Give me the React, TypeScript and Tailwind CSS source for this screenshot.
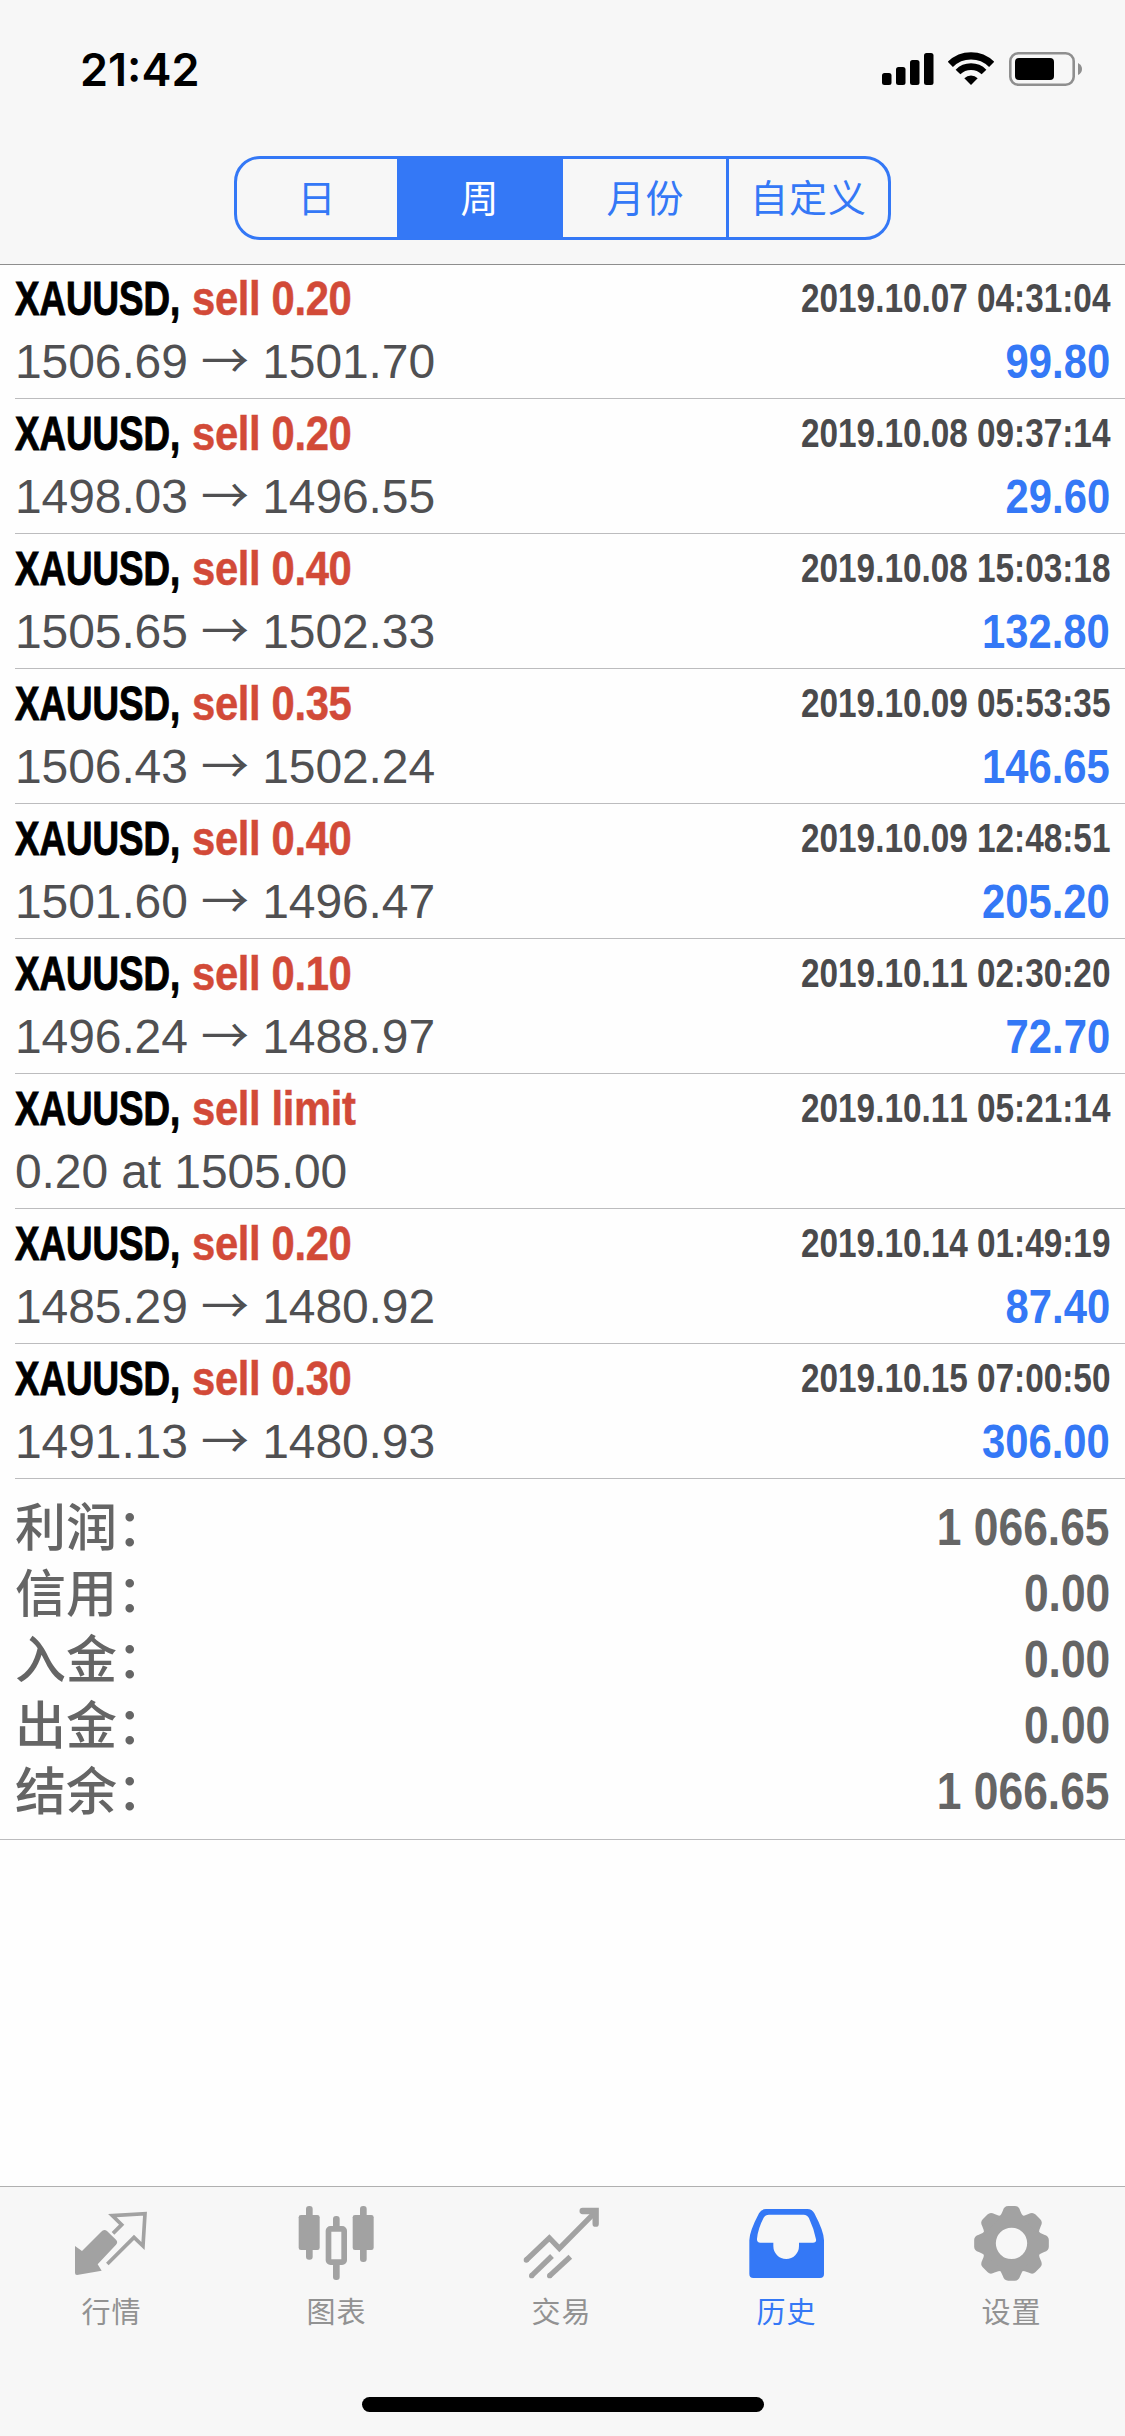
import type { ReactNode } from 'react';
import { clsx } from 'clsx';

interface Deal {
  action: string;
  time: string;
  open: string;
  close?: string;
  profit?: string;
}

const deals: Deal[] = [
  { action: 'sell 0.20', time: '2019.10.07 04:31:04', open: '1506.69', close: '1501.70', profit: '99.80' },
  { action: 'sell 0.20', time: '2019.10.08 09:37:14', open: '1498.03', close: '1496.55', profit: '29.60' },
  { action: 'sell 0.40', time: '2019.10.08 15:03:18', open: '1505.65', close: '1502.33', profit: '132.80' },
  { action: 'sell 0.35', time: '2019.10.09 05:53:35', open: '1506.43', close: '1502.24', profit: '146.65' },
  { action: 'sell 0.40', time: '2019.10.09 12:48:51', open: '1501.60', close: '1496.47', profit: '205.20' },
  { action: 'sell 0.10', time: '2019.10.11 02:30:20', open: '1496.24', close: '1488.97', profit: '72.70' },
  { action: 'sell limit', time: '2019.10.11 05:21:14', open: '0.20 at 1505.00' },
  { action: 'sell 0.20', time: '2019.10.14 01:49:19', open: '1485.29', close: '1480.92', profit: '87.40' },
  { action: 'sell 0.30', time: '2019.10.15 07:00:50', open: '1491.13', close: '1480.93', profit: '306.00' },
];

const summary = [
  ['利润', '1 066.65'],
  ['信用', '0.00'],
  ['入金', '0.00'],
  ['出金', '0.00'],
  ['结余', '1 066.65'],
];

const periods = [
  { label: '日', width: 'w-[160px]' },
  { label: '周', width: 'w-[166px]' },
  { label: '月份', width: 'w-[163px] pl-[2px]' },
  { label: '自定义', width: 'w-[162px]' },
];

// Condensed look: bold sans squeezed horizontally
const amount = "origin-right scale-x-[0.87] font-['Liberation_Sans',sans-serif] font-bold";

function StatusBar() {
  return (
    <div className="flex h-[138px] items-center justify-between pr-[43px] pl-[80px]">
      <span className="font-['Inter',sans-serif] text-[45px] leading-none font-semibold text-black">21:42</span>
      <div className="flex items-center">
        <svg className="h-[34px] w-[52px]" viewBox="0 0 52 34">
          <rect x="0" y="21" width="9.5" height="12" rx="2.5" />
          <rect x="14" y="15" width="9.5" height="18" rx="2.5" />
          <rect x="28" y="8" width="9.5" height="25" rx="2.5" />
          <rect x="42" y="1" width="9.5" height="32" rx="2.5" />
        </svg>
        <svg className="ml-[14px] h-[34px] w-[46px]" viewBox="0 0 138 102" fill="none" stroke="#000">
          <path d="M7 37A88 88 0 0 1 131 37" strokeWidth="22" />
          <path d="M30 60A55 55 0 0 1 108 60" strokeWidth="20" />
          <path d="M69 99L49 79A28 28 0 0 1 89 79Z" fill="#000" stroke="none" />
        </svg>
        <svg className="ml-[15px] h-[34px] w-[73px]" viewBox="0 0 73 34">
          <rect x="1.3" y="1.3" width="63.4" height="31.4" rx="8" fill="none" stroke="#8f8f8f" strokeWidth="2.6" />
          <rect x="6" y="6" width="39" height="22" rx="4" />
          <path d="M69 11Q73 13 73 17T69 23Z" fill="#8f8f8f" />
        </svg>
      </div>
    </div>
  );
}

function PeriodPicker() {
  return (
    <div className="mx-auto mt-[18px] flex h-[84px] w-[657px] overflow-hidden rounded-[26px] border-3 border-[#3478f6]">
      {periods.map(({ label, width }, i) => (
        <button
          key={label}
          className={clsx(
            "flex items-center justify-center pb-[4px] font-['Noto_Sans_CJK_SC',sans-serif] text-[38px] leading-none tracking-[1px]",
            width,
            i === 1 ? 'bg-[#3478f6] text-white' : 'text-[#3478f6]',
            i === 3 && 'border-l-3 border-[#3478f6]',
          )}
        >
          {label}
        </button>
      ))}
    </div>
  );
}

function DealRow({ deal }: { deal: Deal }) {
  return (
    <li className="ml-[15px] h-[135px] border-b border-[#bcbcbe] pr-[15px] font-['Liberation_Sans',sans-serif] [font-kerning:none]">
      <div className="flex h-[70px] items-center font-bold">
        <p className="w-[177px] origin-left scale-x-[0.765] text-[48px] leading-none whitespace-nowrap text-black [-webkit-text-stroke:1px_#000]">
          XAUUSD,
        </p>
        <p className="origin-left scale-x-[0.87] text-[48px] leading-none tracking-[-0.4px] text-[#d24a38] [-webkit-text-stroke:0.5px_#d24a38]">
          {deal.action}
        </p>
        <p className="ml-auto origin-right scale-x-[0.833] pb-[2px] text-[40px] leading-none text-[#4a4a4c]">
          {deal.time}
        </p>
      </div>
      <div className="flex h-[55px] items-center justify-between text-[48px] leading-none">
        <p className="tracking-[-0.1px] text-[#505052]">
          {deal.open}
          {deal.close && (
            <>
              {' '}
              <span className="font-['Noto_Sans_CJK_SC',sans-serif] leading-[0]">→</span> {deal.close}
            </>
          )}
        </p>
        <p className={clsx('text-[#3478f6]', amount)}>{deal.profit}</p>
      </div>
    </li>
  );
}

function QuotesIcon() {
  return (
    <>
      <path d="M14 129L35 144L92 87Q101 76 110 84L137 110Q144 118 137 125L82 184L94 203L20 216Q14 216 14 210Z" />
      <path d="M128 91L154 65L126 38L224 32L218 129L191 103L111 183" fill="none" stroke="currentColor" strokeWidth="11" />
    </>
  );
}

function ChartIcon() {
  return (
    <>
      <rect x="32" y="9" width="20" height="161" rx="9" />
      <rect x="10" y="36" width="63" height="105" rx="7" />
      <rect x="194" y="9" width="20" height="168" rx="9" />
      <rect x="172" y="36" width="63" height="105" rx="7" />
      <rect x="113" y="39" width="20" height="40" rx="9" />
      <rect x="113" y="178" width="20" height="53" rx="9" />
      <rect x="99.5" y="77.5" width="47" height="100" rx="6" fill="none" stroke="currentColor" strokeWidth="17" />
    </>
  );
}

function TradeIcon() {
  return (
    <g fill="none" stroke="currentColor" strokeWidth="16">
      <path d="M18 171L87 105L117 136L221 31" />
      <path d="M187 24H226V62" strokeWidth="19" strokeLinecap="round" />
      <path d="M34 218L95 159" />
      <path d="M88 218L150 161" />
      <g fill="currentColor" stroke="none">
        <circle cx="18" cy="171" r="8" />
        <circle cx="34" cy="218" r="8" />
        <circle cx="88" cy="218" r="8" />
      </g>
    </g>
  );
}

function HistoryIcon() {
  return (
    <path
      fillRule="evenodd"
      d="M62 18H186Q200 18 207 31Q236 86 236 112V213Q236 225 224 225H24Q12 225 12 213V112Q12 86 41 31Q48 18 62 18ZM71 35Q60 35 55 44Q38 76 35 107Q34 119 45 119H84V129A38.5 39 0 0 0 161 129V119H203Q214 119 212 109Q206 78 191 46Q186 35 175 35Z"
    />
  );
}

const teeth = [0, 45, 90, 135, 180, 225, 270, 315];

function SettingsIcon() {
  return (
    <g transform="translate(123.5 121)">
      <circle r="68" fill="none" stroke="currentColor" strokeWidth="42" />
      {teeth.map((angle) => (
        <path
          key={angle}
          transform={`rotate(${angle})`}
          d="M-38 -78Q-30 -86 -26 -98Q-22 -112 -10 -112H10Q22 -112 26 -98Q30 -86 38 -78Z"
        />
      ))}
    </g>
  );
}

const tabs: { label: string; icon: ReactNode; active?: boolean }[] = [
  { label: '行情', icon: <QuotesIcon /> },
  { label: '图表', icon: <ChartIcon /> },
  { label: '交易', icon: <TradeIcon /> },
  { label: '历史', icon: <HistoryIcon />, active: true },
  { label: '设置', icon: <SettingsIcon /> },
];

function TabBar() {
  return (
    <nav className="flex h-[250px] flex-col border-t border-[#b0b0b0] bg-[#f7f7f7]">
      <div className="flex pt-4">
        {tabs.map((tab) => (
          <a
            key={tab.label}
            className={clsx('flex flex-1 flex-col items-center', tab.active ? 'text-[#3478f6]' : 'text-[#a2a2a2]')}
          >
            <svg className="mr-px size-[84px]" viewBox="-1 0 252 252" fill="currentColor">
              {tab.icon}
            </svg>
            <span
              className={clsx(
                "mt-[7px] mr-[2px] font-['Noto_Sans_CJK_SC',sans-serif] text-[29px] leading-[32px] tracking-[1px]",
                !tab.active && 'text-[#929292]',
              )}
            >
              {tab.label}
            </span>
          </a>
        ))}
      </div>
      <div className="mx-auto mt-auto mb-6 h-[15px] w-[402px] rounded-full bg-black" />
    </nav>
  );
}

export default function App() {
  return (
    <div className="flex h-[2436px] w-[1125px] flex-col bg-[#fefefe]">
      <header className="relative h-[264px] bg-[#f7f7f7] shadow-[0_1px_0_#8e8e8e]">
        <StatusBar />
        <PeriodPicker />
      </header>

      <main className="flex-1">
        <ul>
          {deals.map((deal) => (
            <DealRow key={deal.time} deal={deal} />
          ))}
        </ul>
        <dl className="border-b border-[#bcbcbe] px-[15px] py-[15px] text-[#656565]">
          {summary.map(([label, value]) => (
            <div key={label} className="flex h-[66px] items-center justify-between text-[51px] leading-none">
              <dt className="pb-[5px] font-['Noto_Sans_CJK_SC',sans-serif] font-medium">{label}：</dt>
              <dd className={amount}>{value}</dd>
            </div>
          ))}
        </dl>
      </main>

      <TabBar />
    </div>
  );
}
